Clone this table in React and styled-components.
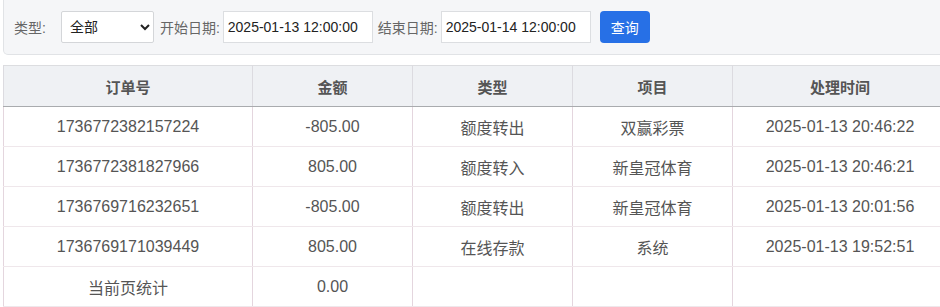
import React from 'react';
import styled, { createGlobalStyle } from 'styled-components';

const rows = [
  { id: '1736772382157224', amount: '-805.00', type: '额度转出', item: '双赢彩票', time: '2025-01-13 20:46:22' },
  { id: '1736772381827966', amount: '805.00', type: '额度转入', item: '新皇冠体育', time: '2025-01-13 20:46:21' },
  { id: '1736769716232651', amount: '-805.00', type: '额度转出', item: '新皇冠体育', time: '2025-01-13 20:01:56' },
  { id: '1736769171039449', amount: '805.00', type: '在线存款', item: '系统', time: '2025-01-13 19:52:51' },
];

export default () => (
  <Page>
    <GlobalStyle />
    <FilterBar>
      <Label $after="15px">类型:</Label>
      <Select defaultValue="all">
        <option value="all">全部</option>
      </Select>
      <Label $before="6px">开始日期:</Label>
      <DateInput defaultValue="2025-01-13 12:00:00" />
      <Label $before="5px">结束日期:</Label>
      <DateInput defaultValue="2025-01-14 12:00:00" />
      <QueryButton>查询</QueryButton>
    </FilterBar>

    <Table>
      <colgroup>
        <col style={{ width: 249 }} />
        <col style={{ width: 160 }} />
        <col style={{ width: 160 }} />
        <col style={{ width: 160 }} />
        <col style={{ width: 215 }} />
      </colgroup>
      <thead>
        <tr>
          <Th>订单号</Th>
          <Th>金额</Th>
          <Th>类型</Th>
          <Th>项目</Th>
          <Th>处理时间</Th>
        </tr>
      </thead>
      <tbody>
        {rows.map((r) => (
          <tr key={r.id}>
            <Td>{r.id}</Td>
            <Td>{r.amount}</Td>
            <Td>{r.type}</Td>
            <Td>{r.item}</Td>
            <Td>{r.time}</Td>
          </tr>
        ))}
        <tr>
          <Td>当前页统计</Td>
          <Td>0.00</Td>
          <Td />
          <Td />
          <Td />
        </tr>
      </tbody>
    </Table>
  </Page>
);

const textColor = '#555';
const cjk = `"Liberation Sans", "Noto Sans CJK SC", sans-serif`;

const GlobalStyle = createGlobalStyle`
  html, body {
    margin: 0;
    background: #fff;
    overflow: hidden;
  }
  body {
    font-family: ${cjk};
  }
`;

const Page = styled.div`
  width: 945px;
  padding-left: 3px;
`;

const FilterBar = styled.div`
  box-sizing: border-box;
  height: 55px;
  display: flex;
  align-items: center;
  padding: 0 0 0 10px;
  background: #f5f6f8;
  border: 1px solid #e1e3e6;
  border-top: none;
  border-radius: 0 0 5px 5px;
`;

const Label = styled.span`
  font-size: 14px;
  color: #666;
  margin: 0 ${(p) => p.$after || '3px'} 0 ${(p) => p.$before || '0'};
  white-space: nowrap;
`;

const Select = styled.select`
  box-sizing: border-box;
  width: 93px;
  height: 32px;
  margin: 0;
  padding: 0 4px;
  font-family: ${cjk};
  font-size: 14px;
  color: #222;
  background: #fff;
  border: 1px solid #d4d6d9;
  border-radius: 2px;
`;

const DateInput = styled.input`
  box-sizing: border-box;
  width: 150px;
  height: 32px;
  padding: 0 4px;
  font-family: ${cjk};
  font-size: 14px;
  color: #222;
  background: #fff;
  border: 1px solid #dcdee1;
  border-radius: 0;
  outline: none;
`;

const QueryButton = styled.button`
  box-sizing: border-box;
  width: 50px;
  height: 32px;
  margin-left: 9px;
  font-family: ${cjk};
  font-size: 14px;
  color: #fff;
  background: #2770e6;
  border: none;
  border-radius: 4px;
`;

const Table = styled.table`
  margin-top: 10px;
  width: 944px;
  table-layout: fixed;
  border-collapse: collapse;
  border: 1px solid #dcdde0;
  font-family: ${cjk};
`;

const Th = styled.th`
  height: 40px;
  padding: 0;
  background: #eff1f4;
  color: ${textColor};
  font-size: 15px;
  font-weight: bold;
  text-align: center;
  border-left: 1px solid #dcdbe0;
  border-bottom: 1px solid #a9abae;
`;

const Td = styled.td`
  height: 39px;
  padding: 0;
  color: ${textColor};
  font-size: 16px;
  text-align: center;
  border-left: 1px solid #e4d6de;
  border-bottom: 1px solid #efe7eb;
`;
